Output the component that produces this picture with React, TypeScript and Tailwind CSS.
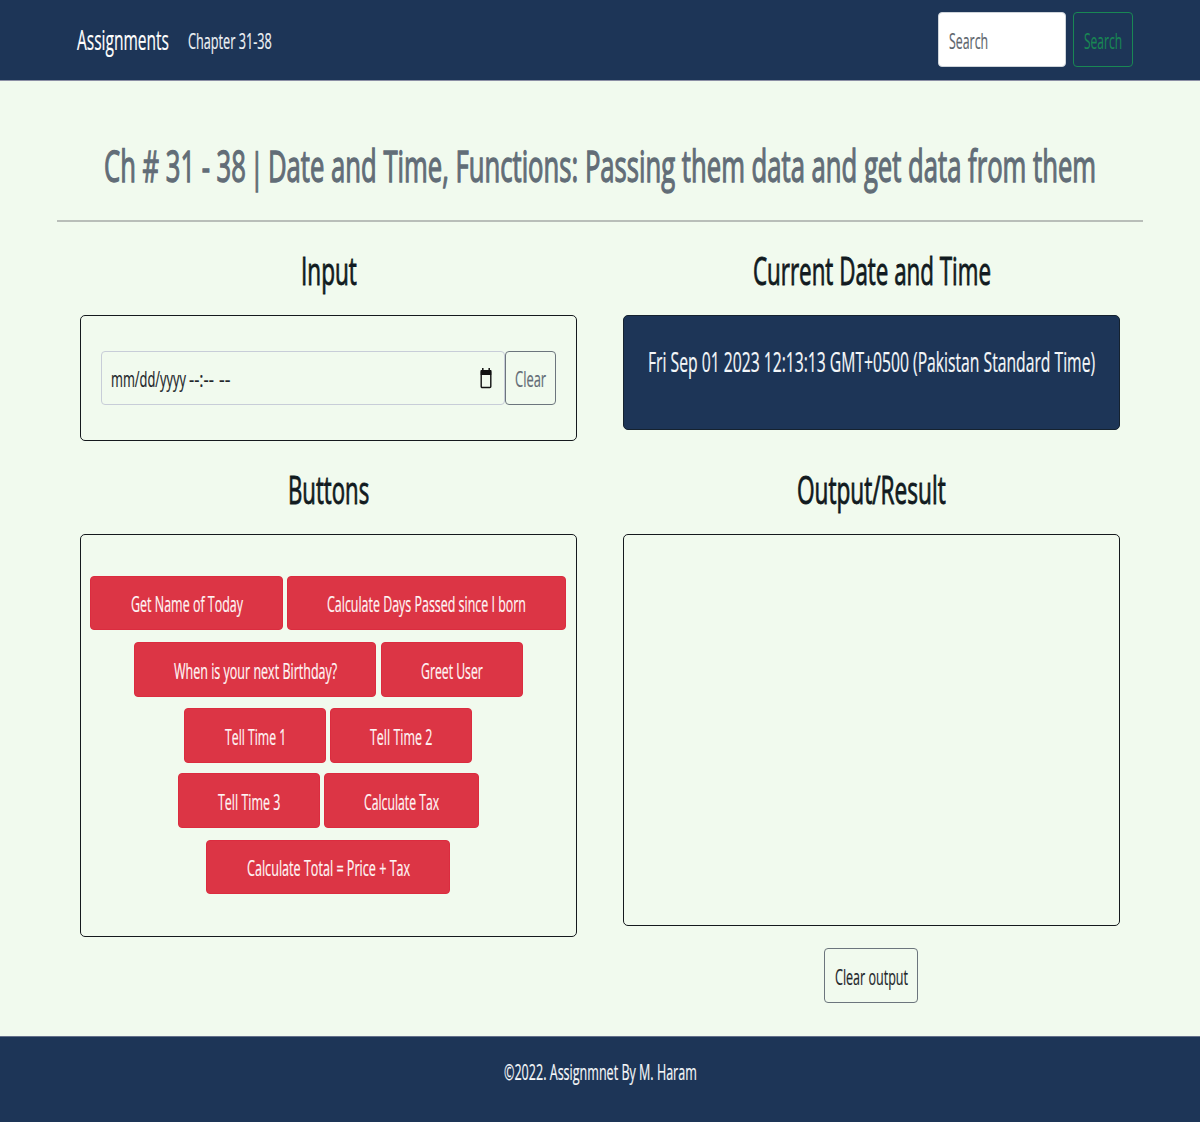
import { useLayoutEffect, useRef, useState } from "react";

/** Single line of text condensed horizontally to an exact width. */
function Fit({ w, children, className = "" }: { w: number; children: string; className?: string }) {
  const ref = useRef<HTMLSpanElement>(null);
  const [scale, setScale] = useState(1);
  useLayoutEffect(() => {
    if (ref.current) setScale(w / ref.current.offsetWidth);
  }, [w, children]);
  return (
    <span className={`block shrink-0 whitespace-nowrap ${className}`} style={{ width: w }}>
      <span ref={ref} className="inline-block origin-left" style={{ transform: `translateY(1px) scaleX(${scale})` }}>
        {children}
      </span>
    </span>
  );
}

type Action = { label: string; w: number; text: number };

const rows: { height: string; actions: Action[] }[] = [
  { height: "h-[54px] mb-3 pr-px gap-1", actions: [{ label: "Get Name of Today", w: 193, text: 112 }, { label: "Calculate Days Passed since I born", w: 279, text: 199 }] },
  { height: "h-[55px] mb-[11px] gap-[5px]", actions: [{ label: "When is your next Birthday?", w: 242, text: 163 }, { label: "Greet User", w: 142, text: 62 }] },
  { height: "h-[55px] mb-[10px] pr-px gap-1", actions: [{ label: "Tell Time 1", w: 142, text: 61 }, { label: "Tell Time 2", w: 142, text: 62 }] },
  { height: "h-[55px] mb-3 gap-1", actions: [{ label: "Tell Time 3", w: 142, text: 62 }, { label: "Calculate Tax", w: 155, text: 75 }] },
  { height: "h-[54px] pr-px", actions: [{ label: "Calculate Total = Price + Tax", w: 244, text: 163 }] },
];

function Heading({ w, children, className = "" }: { w: number; children: string; className?: string }) {
  return (
    <h2 className={`flex h-[60px] items-center justify-center text-[37.5px] leading-[60px] text-[#111a20] [-webkit-text-stroke:0.9px_#111a20] ${className}`}>
      <Fit w={w}>{children}</Fit>
    </h2>
  );
}

function CalendarIcon() {
  return (
    <svg className="h-[22px] w-3" viewBox="0 0 12 22" fill="none">
      <path d="M2.8 1v3M9.2 1v3" stroke="#111" strokeWidth="1.5" />
      <rect x="1.2" y="3.7" width="9.6" height="16.8" rx="1" stroke="#111" strokeWidth="1.4" />
      <path d="M.7 3h10.6v5H.7z" fill="#111" />
    </svg>
  );
}

export default function App() {
  return (
    <div className="flex h-[1122px] w-[1200px] flex-col overflow-hidden bg-[#f1faee] font-['Open_Sans','Noto_Sans',sans-serif] text-[22.5px] leading-[54px] text-[#212529] [-webkit-text-stroke:0.2px]">
      <nav className="flex h-[81px] shrink-0 items-start border-b border-[#8c8fa5] bg-[#1d3557] pl-[77px] pr-[67px] pt-3">
        <Fit w={92} className="text-[27.5px] text-white">Assignments</Fit>
        <Fit w={84} className="ml-[19px] pt-px text-[#eef2f5]">Chapter 31-38</Fit>
        <form className="ml-auto flex gap-[7px]">
          <div className="flex h-[55px] w-32 items-center rounded-[4px] border border-[#ced4da] bg-white pl-[10px] text-[#5c646c]">
            <Fit w={39}>Search</Fit>
          </div>
          <button type="button" className="flex h-[55px] w-[60px] items-center justify-center rounded-[4px] border border-[#198754] text-[#198754]">
            <Fit w={38}>Search</Fit>
          </button>
        </form>
      </nav>

      <main className="flex grow flex-col px-[57px]">
        <h1 className="mt-[49px] flex h-[70px] items-center pl-[47px] text-[43.5px] leading-[70px] text-[#626d77] [-webkit-text-stroke:1.3px_#626d77]">
          <Fit w={142}>Ch # 31 - 38</Fit>
          <Fit w={14} className="ml-1 text-[41px] leading-[68px]">|</Fit>
          <Fit w={828} className="ml-1">Date and Time, Functions: Passing them data and get data from them</Fit>
        </h1>
        <hr className="mt-5 h-[2px] border-0 bg-[#b9beb9]" />

        <div className="flex gap-[46px] px-[23px]">
          <section className="w-[497px]">
            <Heading w={56} className="mt-[18px]">Input</Heading>
            <div className="mt-[15px] flex h-[126px] rounded-[5px] border border-[#15191d] px-5 pt-[35px]">
              <div className="flex h-[54px] w-[405px] items-center rounded-[4px] border border-[#c8cdd8] pl-[9px] pr-3">
                <Fit w={75}>mm/dd/yyyy</Fit>
                <Fit w={25} className="ml-[3px]">--:--</Fit>
                <Fit w={11} className="ml-[5px]">--</Fit>
                <span className="ml-auto flex">
                  <CalendarIcon />
                </span>
              </div>
              <button type="button" className="flex h-[54px] w-[51px] items-center justify-center rounded-[4px] border border-[#6c757d] text-[#626b75]">
                <Fit w={31}>Clear</Fit>
              </button>
            </div>
            <Heading w={81} className="mt-[18px]">Buttons</Heading>
            <div className="mt-[15px] h-[403px] rounded-[5px] border border-[#15191d] pt-[41px]">
              {rows.map((row, i) => (
                <div key={i} className={`flex justify-center ${row.height}`}>
                  {row.actions.map((a) => (
                    <button
                      key={a.label}
                      type="button"
                      className="flex h-full shrink-0 items-center justify-center rounded-[4px] border border-[#db2c3f] bg-[#dc3545] text-[#fff5f5]"
                      style={{ width: a.w }}
                    >
                      <Fit w={a.text}>{a.label}</Fit>
                    </button>
                  ))}
                </div>
              ))}
            </div>
          </section>

          <section className="w-[497px]">
            <Heading w={238} className="mt-[18px]">Current Date and Time</Heading>
            <div className="mt-[15px] flex h-[115px] justify-center rounded-[5px] border border-[#15222f] bg-[#1d3557] pt-[18px] text-[27.5px] text-[#f4f7f9]">
              <Fit w={447}>Fri Sep 01 2023 12:13:13 GMT+0500 (Pakistan Standard Time)</Fit>
            </div>
            <Heading w={149} className="mt-[29px]">Output/Result</Heading>
            <div className="mt-[15px] h-[392px] rounded-[5px] border border-[#15191d]" />
            <button type="button" className="ml-[201px] mt-[22px] flex h-[55px] w-[94px] items-center justify-center rounded-[4px] border border-[#6c757d]">
              <Fit w={73}>Clear output</Fit>
            </button>
          </section>
        </div>
      </main>

      <footer className="flex h-[86px] shrink-0 justify-center border-t border-[#64708a] bg-[#1d3557] pt-[7px] text-[#f4f7f9]">
        <Fit w={193}>©2022. Assignmnet By M. Haram</Fit>
      </footer>
    </div>
  );
}
